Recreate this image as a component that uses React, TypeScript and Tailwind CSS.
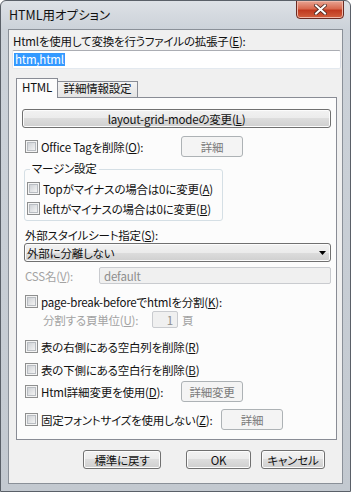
import type { ReactNode } from 'react'

function CheckBox() {
  return (
    <span className="flex h-[13px] w-[13px] shrink-0 items-center justify-center border border-[#8e8f8f] bg-[#f4f4f4]">
      <span className="h-[9px] w-[9px] border border-[#b9bdc2] bg-[linear-gradient(135deg,#cfd2d6,#f3f3f3)]" />
    </span>
  )
}

function Button({ children, className = '', disabled = false }: { children: ReactNode; className?: string; disabled?: boolean }) {
  return disabled ? (
    <div className={`flex shrink-0 items-center justify-center rounded-[3px] border border-[#adb2b5] bg-[#f4f4f4] text-[#7a7a7a] ${className}`}>
      {children}
    </div>
  ) : (
    <div className={`flex shrink-0 items-center justify-center rounded-[3px] border border-[#707070] bg-[linear-gradient(#f2f2f2,#ebebeb_50%,#dddddd_50%,#cfcfcf)] shadow-[inset_0_0_0_1px_#fcfcfc] ${className}`}>
      {children}
    </div>
  )
}

function CheckRow({ label, className = '', labelWidth, children }: { label: ReactNode; className?: string; labelWidth?: string; children?: ReactNode }) {
  return (
    <div className={`flex items-center ${className}`}>
      <CheckBox />
      <span className={`ml-[3px] whitespace-nowrap ${labelWidth ?? ''}`}>{label}</span>
      {children}
    </div>
  )
}

export default function App() {
  return (
    <div className="h-[492px] w-[351px] bg-white">
      <div className="flex h-[492px] w-[351px] flex-col overflow-hidden rounded-t-[6px] border border-[#5a6068] bg-[linear-gradient(#dde1e6,#ccd2d9_28px,#c3c9d0)] text-[11.5px] leading-[14px] tracking-[-0.2px] text-[#111] font-['Noto_Sans_CJK_JP','Noto_Sans',sans-serif] [font-feature-settings:'palt']">
        {/* title bar */}
        <div className="flex h-[28px] shrink-0 items-start">
          <div className="ml-[8px] mt-[7px] whitespace-nowrap text-[12.5px] tracking-normal">HTML用オプション</div>
          <div className="ml-auto mr-[6px] -mt-px flex h-[19px] w-[48px] items-center justify-center rounded-b-[4px] border border-[#6a2a22] bg-[linear-gradient(#e8a493,#d8694f_45%,#c0391f_55%,#d2603e)] shadow-[inset_0_0_0_1px_#f0b7a8]">
            <svg width="13" height="11" viewBox="0 0 13 11">
              <path d="M2 1.5 L11 9.5 M11 1.5 L2 9.5" stroke="#4a2620" strokeWidth="3.6" strokeLinecap="square" />
              <path d="M2 1.5 L11 9.5 M11 1.5 L2 9.5" stroke="#ffffff" strokeWidth="2" strokeLinecap="square" />
            </svg>
          </div>
        </div>

        {/* client area */}
        <div className="mx-[7px] flex h-[455px] shrink-0 flex-col border border-[#8a9098] bg-[#f0f0f0] pl-[3px]">
          <div className="mt-[4px] whitespace-nowrap pl-[1px]">
            Htmlを使用して変換を行うファイルの拡張子(<u>E</u>):
          </div>
          <div className="mt-[2px] flex h-[19px] w-[329px] items-center rounded-[2px] border border-[#abadb3] border-b-[#e3e9ef] border-l-[#e2e3ea] border-r-[#dbdfe6] bg-white pl-[1px]">
            <span className="bg-[#3399ff] px-px leading-[13px] text-white">htm,html</span>
          </div>

          {/* tabs */}
          <div className="ml-[4px] mt-[9px] flex h-[19px] items-end">
            <div className="relative z-10 -mb-px flex h-[20px] w-[42px] justify-center border border-b-0 border-[#898c95] bg-[#fcfcfc] pt-px">
              HTML
            </div>
            <div className="flex h-[16px] w-[80px] justify-center border border-b-0 border-l-0 border-[#898c95] bg-[linear-gradient(#f3f3f3,#e4e4e4)]">
              <span className="-mt-px whitespace-nowrap">詳細情報設定</span>
            </div>
          </div>

          {/* tab panel */}
          <div className="ml-[4px] flex h-[343px] w-[321px] flex-col border border-[#898c95] bg-[#fcfcfc]">
            <Button className="ml-[5px] mt-[11px] h-[19px] w-[309px]">
              layout-grid-modeの変更(<u>L</u>)
            </Button>

            <CheckRow className="ml-[8px] mt-[8px] h-[21px]" labelWidth="w-[140px]" label={<>Office Tagを削除(<u>O</u>):</>}>
              <Button disabled className="h-[21px] w-[62px]">詳細</Button>
            </CheckRow>

            {/* margin group */}
            <div className="relative ml-[7px] mt-[12px] flex h-[52px] w-[199px] flex-col rounded-[3px] border border-[#d5dfe5]">
              <span className="absolute -top-[9px] left-[5px] whitespace-nowrap bg-[#fcfcfc] px-[2px]">マージン設定</span>
              <CheckRow className="ml-[2px] mt-[9px] h-[19px]" label={<>Topがマイナスの場合は0に変更(<u>A</u>)</>} />
              <CheckRow className="ml-[2px] mt-[1px] h-[19px]" label={<>leftがマイナスの場合は0に変更(<u>B</u>)</>} />
            </div>

            <div className="ml-[8px] mt-[7px] whitespace-nowrap">
              外部スタイルシート指定(<u>S</u>):
            </div>
            <div className="ml-[7px] mt-px flex h-[19px] w-[307px] items-center justify-between rounded-[3px] border border-[#707070] bg-[linear-gradient(#f2f2f2,#ebebeb_50%,#dddddd_50%,#cfcfcf)] pl-[2px] pr-[4px] shadow-[inset_0_0_0_1px_#fcfcfc]">
              <span className="whitespace-nowrap">外部に分離しない</span>
              <svg width="7" height="4" viewBox="0 0 7 4">
                <path d="M0 0 H7 L3.5 4 Z" fill="#000" />
              </svg>
            </div>

            <div className="ml-[8px] mt-[5px] flex h-[17px] items-center">
              <span className="w-[74px] whitespace-nowrap text-[#a3a3a3]">CSS名(<u>V</u>):</span>
              <div className="flex h-[17px] w-[232px] items-center rounded-[2px] border border-[#c9cbcf] bg-[#f0f0f0] pl-[4px] text-[#8d8d8d]">
                default
              </div>
            </div>

            <CheckRow className="ml-[8px] mt-[8px] h-[19px]" label={<>page-break-beforeでhtmlを分割(<u>K</u>):</>} />

            <div className="ml-[26px] flex h-[17px] items-center text-[#a3a3a3]">
              <span className="w-[109px] whitespace-nowrap">分割する頁単位(<u>U</u>):</span>
              <div className="flex h-[17px] w-[26px] items-center justify-end rounded-[2px] border border-[#c9cbcf] bg-[#f0f0f0] pr-[4px] text-[#8d8d8d]">
                1
              </div>
              <span className="ml-[4px]">頁</span>
            </div>

            <CheckRow className="ml-[8px] mt-[9px] h-[19px]" label={<>表の右側にある空白列を削除(<u>R</u>)</>} />
            <CheckRow className="ml-[8px] mt-[4px] h-[19px]" label={<>表の下側にある空白行を削除(<u>B</u>)</>} />

            <CheckRow className="ml-[8px] mt-[2px] h-[21px]" labelWidth="w-[140px]" label={<>Html詳細変更を使用(<u>D</u>):</>}>
              <Button disabled className="h-[21px] w-[62px]">詳細変更</Button>
            </CheckRow>

            <CheckRow className="ml-[8px] mt-[7px] h-[21px]" labelWidth="w-[180px]" label={<>固定フォントサイズを使用しない(<u>Z</u>):</>}>
              <Button disabled className="h-[21px] w-[62px]">詳細</Button>
            </CheckRow>
          </div>

          {/* bottom buttons */}
          <div className="mt-[10px] flex">
            <Button className="ml-[71px] h-[19px] w-[78px]">標準に戻す</Button>
            <Button className="ml-[25px] h-[19px] w-[65px]">OK</Button>
            <Button className="ml-[10px] h-[19px] w-[64px]">キャンセル</Button>
          </div>
        </div>
      </div>
    </div>
  )
}
